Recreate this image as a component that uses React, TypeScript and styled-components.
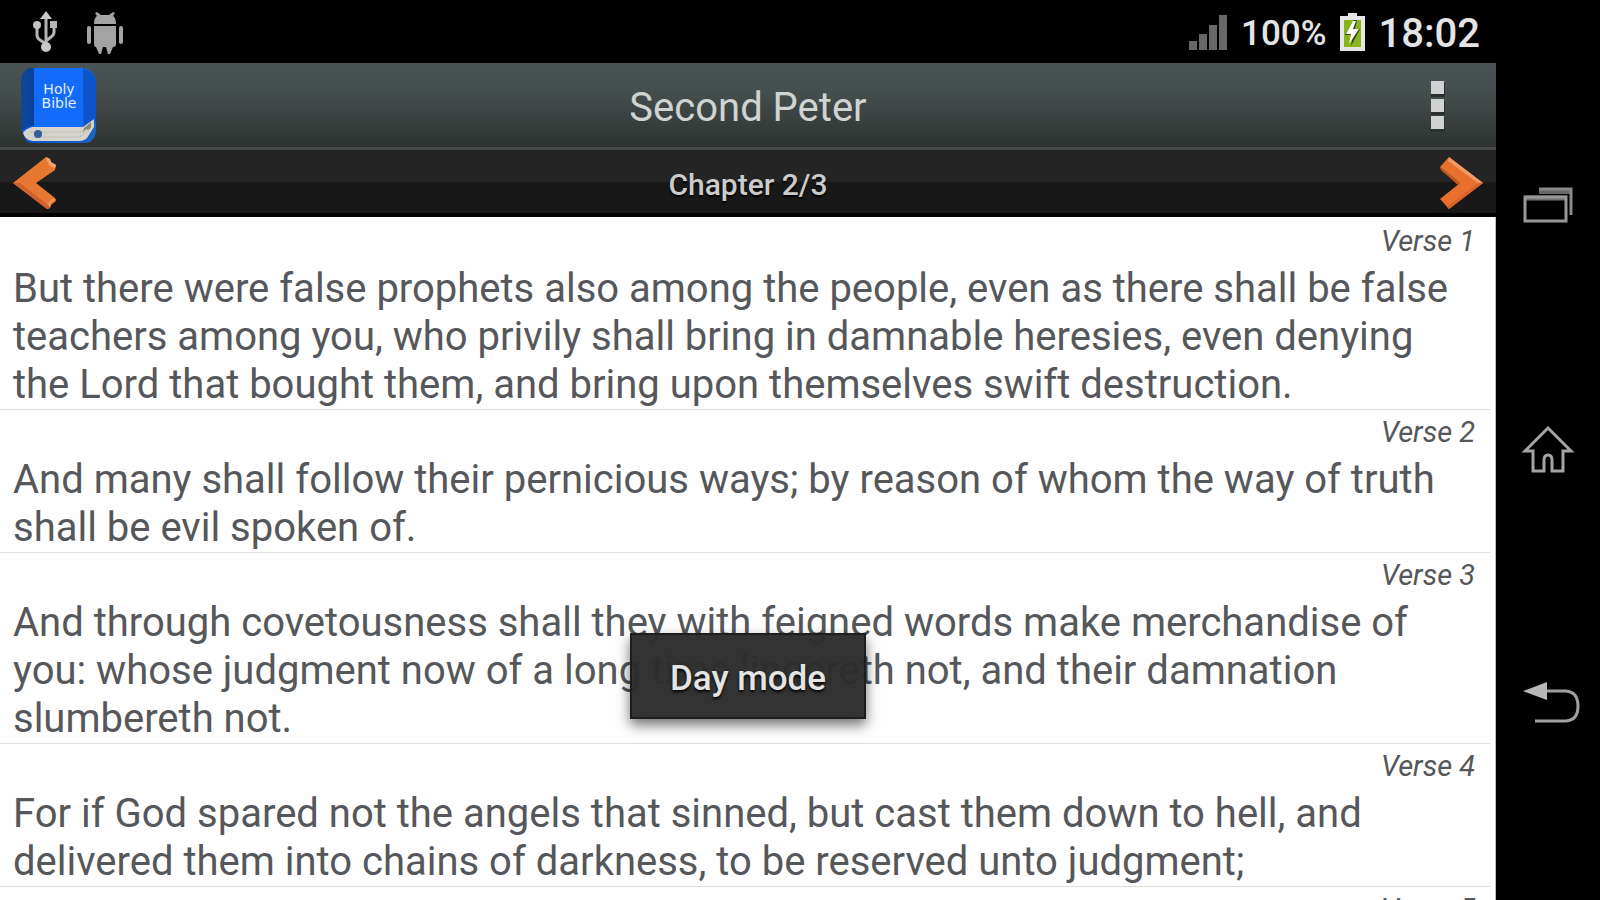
import React from "react";
import styled, { createGlobalStyle } from "styled-components";

const GlobalStyle = createGlobalStyle`
  *, *::before, *::after { box-sizing: border-box; }
  body {
    margin: 0;
    background: #000;
    font-family: Roboto, "Liberation Sans", sans-serif;
  }
  button { padding: 0; border: 0; background: none; cursor: pointer; }
  svg { display: block; flex: none; }
`;

const Device = styled.div`
  display: flex;
  height: 100vh;
  overflow: hidden;
  background: #000;
`;

const Screen = styled.div`
  position: relative;
  flex: 1;
  min-width: 0;
  display: flex;
  flex-direction: column;
`;

const StatusBar = styled.div`
  flex: none;
  display: flex;
  align-items: center;
  justify-content: space-between;
  height: 63px;
  padding: 0 16px 0 32px;
  color: #e4e4e4;
`;

const StatusGroup = styled.div<{ $gap: number }>`
  display: flex;
  align-items: center;
  gap: ${(p) => p.$gap}px;
`;

const Battery = styled.span`
  padding-top: 4px;
  font-size: 35px;
  line-height: 40px;
  font-weight: 500;
`;

const Clock = styled.time`
  padding-top: 4px;
  font-size: 40px;
  line-height: 48px;
  font-weight: 500;
`;

const TitleBar = styled.header`
  flex: none;
  display: grid;
  grid-template-columns: 104px 1fr 104px;
  align-items: center;
  height: 87px;
  border-bottom: 3px solid #454a49;
  background: linear-gradient(#4b5455, #454e4e 35%, #2d322f);
`;

const BookLink = styled.a`
  padding: 2px 0 0 20px;
`;

const Title = styled.h1`
  margin: 0;
  padding-top: 6px;
  font-size: 40px;
  line-height: 48px;
  font-weight: 400;
  text-align: center;
  color: #cfd3d2;
`;

const MenuButton = styled.button`
  display: flex;
  justify-content: center;
  align-items: center;
  height: 84px;
  padding: 2px 12px 0 0;
`;

const ChapterBar = styled.nav`
  flex: none;
  display: flex;
  align-items: center;
  justify-content: space-between;
  height: 67px;
  padding: 2px 12px 0;
  border-bottom: 4px solid #000;
  background: linear-gradient(#242424 50%, #181818 50%);
`;

const ChapterLabel = styled.h2`
  margin: 0;
  padding-top: 4px;
  font-size: 30px;
  line-height: 40px;
  font-weight: 500;
  color: #cbcbcb;
  text-shadow: 0 2px 2px #000;
`;

const VerseList = styled.ol`
  flex: 1;
  min-height: 0;
  margin: 0;
  padding: 2px 5px 0 0;
  overflow: hidden;
  list-style: none;
  background: #fefefe;
  border-right: 1px solid #bdbdbd;
`;

const Verse = styled.li`
  border-bottom: 1px solid #dedede;
`;

const VerseLabel = styled.div`
  padding: 2px 15px 0 0;
  font-size: 29px;
  line-height: 40px;
  font-style: italic;
  text-align: right;
  color: #555759;
`;

const VerseText = styled.p`
  margin: 0;
  padding: 4px 20px 0 13px;
  font-size: 40px;
  line-height: 48px;
  color: #55575a;
`;

const ToastLayer = styled.div`
  position: absolute;
  right: 0;
  bottom: 181px;
  left: 0;
  display: flex;
  justify-content: center;
  pointer-events: none;
`;

const Toast = styled.div`
  padding: 24px 38px 18px;
  border: 2px solid #1e1e1e;
  background: rgba(44, 44, 44, 0.97);
  box-shadow: 0 6px 12px rgba(0, 0, 0, 0.55);
  font-size: 35px;
  line-height: 40px;
  font-weight: 500;
  color: #e4e4e4;
  text-shadow: 0 2px 3px #000;
`;

const SystemKeys = styled.nav`
  flex: none;
  display: flex;
  flex-direction: column;
  width: 104px;
  padding: 81px 0 75px;
`;

const SystemKey = styled.button`
  flex: 1;
  display: flex;
  align-items: center;
  justify-content: center;
`;

const UsbIcon = () => (
  <svg width="28" height="44" viewBox="0 0 28 44" fill="none" stroke="#b4b4b4" strokeWidth="3">
    <path d="M14 8V38M5 16v9q0 3 3 5l6 4M22 16v6q0 3-3 5l-5 4" />
    <path d="M14 1l6 8H8z" fill="#c8c8c8" stroke="none" />
    <circle cx="5" cy="15" r="4" fill="#c0c0c0" stroke="none" />
    <path d="M18 11h7v7h-7z" fill="#b4b4b4" stroke="none" />
    <circle cx="14" cy="37" r="5" fill="#c8c8c8" stroke="none" />
  </svg>
);

const RobotIcon = () => (
  <svg width="38" height="44" viewBox="0 0 38 44" fill="#a3a3a3">
    <path d="M8 14c0-4 1-7 3-8L9 3l2-1 4 3h8l4-3 2 1-2 3c2 1 3 4 3 8z" />
    <path d="M8 16h22v18q0 3-3 3l-3 7h-2l-2-7h-3l-2 7h-2l-3-7q-2 0-2-3z" />
    <rect x="1" y="16" width="4" height="18" rx="2" />
    <rect x="33" y="16" width="4" height="18" rx="2" />
  </svg>
);

const SignalIcon = () => (
  <svg width="40" height="36" viewBox="0 0 40 36" fill="#686868">
    <rect x="0" y="27" width="8" height="9" />
    <rect x="10" y="20" width="8" height="16" />
    <rect x="20" y="11" width="8" height="25" />
    <rect x="30" y="1" width="8" height="35" />
  </svg>
);

const BatteryIcon = () => (
  <svg width="28" height="40" viewBox="0 0 28 40">
    <path d="M1 4h8V1h9v3h8v35H1z" fill="#e6e6e6" />
    <path d="M5 8h17v27H5z" fill="#86b61c" />
    <path d="M15 8h3l-2 9h5l-9 17 2-11H6z" fill="#33420f" />
    <path d="M14 9l-7 13h5l-2 10 10-15h-6l3-8z" fill="#fff" />
  </svg>
);

const BookIcon = () => (
  <svg width="78" height="78" viewBox="0 0 78 78">
    <defs>
      <linearGradient id="spine" x1="0" x2="1" y1="0" y2="0">
        <stop offset="0" stopColor="#0f4796" />
        <stop offset="1" stopColor="#0b3f9b" />
      </linearGradient>
      <linearGradient id="edge" x1="0" x2="1" y1="0" y2="0">
        <stop offset="0" stopColor="#0c55d2" />
        <stop offset="1" stopColor="#1c62c8" />
      </linearGradient>
    </defs>
    <path d="M10 1h55q8 2 11 11v51q0 7-6 12-4 1-9 1H14Q4 76 3 66l-2-4V12Q3 3 10 1z" fill="url(#edge)" />
    <path d="M14 1h-4Q2 4 1 12v52l6-4 8-2V1z" fill="url(#spine)" />
    <path d="M14 1h49v59H14z" fill="#126bfa" />
    <path d="M63 2l7 3q5 3 6 8v41L64 62z" fill="#0c54c8" />
    <path d="M3 66q2-4 9-6h51l11-8v8l-7 11q-3 3-8 3H13Q5 73 3 66z" fill="#d5d3cc" />
    <path d="M9 65h53l8-7M12 70h48l9-7" fill="none" stroke="#c2c0b9" strokeWidth="1" />
    <path d="M64 61l7-6v6l-3 2-2-1-3 4z" fill="#8a8a75" />
    <circle cx="18" cy="67" r="4" fill="#345d97" />
    <g fill="#e3ecff" fontFamily="DejaVu Sans, sans-serif" fontSize="14" textAnchor="middle">
      <text x="39" y="27">Holy</text>
      <text x="39" y="41">Bible</text>
    </g>
  </svg>
);

const MenuIcon = () => (
  <svg width="16" height="52" viewBox="0 0 16 52">
    <g fill="#29302e">
      <rect x="1" y="3" width="14" height="14" />
      <rect x="1" y="21" width="14" height="14" />
      <rect x="1" y="38" width="14" height="14" />
    </g>
    <g fill="#cfd2d1">
      <rect x="1" y="1" width="13" height="13" />
      <rect x="1" y="19" width="13" height="13" />
      <rect x="1" y="36" width="13" height="13" />
    </g>
  </svg>
);

const PrevIcon = () => (
  <svg width="46" height="54" viewBox="0 0 46 54">
    <path d="M1 27L34 1l4 2 1 3 5 3-1 5-19 13 19 15 1 3-5 4-1 3-3 1z" fill="#e87732" />
    <path d="M1 27l34 26 3-1 1-3-4-1L8 27z" fill="#d0602a" />
    <path d="M34 1l4 2 1 3 5 3-1 3-5-2-3-5z" fill="#f4a36c" />
    <path d="M44 43l-5 4-1 4-3-3 5-5z" fill="#f0965c" />
  </svg>
);

const NextIcon = () => (
  <svg width="46" height="54" viewBox="0 0 46 54">
    <path d="M11 1L45 27 11 53 2 43 22 27 2 11z" fill="#e86f2c" />
    <path d="M11 1L45 27h-5L10 5z" fill="#f29a63" />
    <path d="M2 11l20 16-2 2L3 14z" fill="#c9591f" />
    <path d="M45 27L11 53l-2-2 31-24z" fill="#d4622a" />
  </svg>
);

const RecentsIcon = () => (
  <svg width="64" height="64" viewBox="0 0 64 64" fill="none">
    <path d="M23 18h33" stroke="#666" strokeWidth="6" />
    <path d="M23 16h32v26" stroke="#8a8a8a" strokeWidth="3" />
    <path d="M9 25h42" stroke="#707070" strokeWidth="5" />
    <path d="M9 24h41v24H9z" stroke="#989898" strokeWidth="3" />
  </svg>
);

const HomeIcon = () => (
  <svg width="64" height="64" viewBox="0 0 64 64" fill="none" stroke="#a4a4a4" strokeWidth="3">
    <path d="M32 7L9 30h8v20h11V39q0-5 4-5t4 5v11h11V30h8z" />
  </svg>
);

const BackIcon = () => (
  <svg width="64" height="64" viewBox="0 0 64 64" fill="none">
    <path d="M28 22h22q12 1 12 15T50 52H19" stroke="#a0a0a0" strokeWidth="3" />
    <path d="M7 22l24-9v18z" fill="#b8b8b8" />
  </svg>
);

const verses = [
  "But there were false prophets also among the people, even as there shall be false teachers among you, who privily shall bring in damnable heresies, even denying the Lord that bought them, and bring upon themselves swift destruction.",
  "And many shall follow their pernicious ways; by reason of whom the way of truth shall be evil spoken of.",
  "And through covetousness shall they with feigned words make merchandise of you: whose judgment now of a long time lingereth not, and their damnation slumbereth not.",
  "For if God spared not the angels that sinned, but cast them down to hell, and delivered them into chains of darkness, to be reserved unto judgment;",
  "",
];

export default function App() {
  return (
    <>
      <GlobalStyle />
      <Device>
        <Screen>
          <StatusBar>
            <StatusGroup $gap={26}>
              <UsbIcon />
              <RobotIcon />
            </StatusGroup>
            <StatusGroup $gap={12}>
              <SignalIcon />
              <Battery>100%</Battery>
              <BatteryIcon />
              <Clock>18:02</Clock>
            </StatusGroup>
          </StatusBar>
          <TitleBar>
            <BookLink href="#" aria-label="Books">
              <BookIcon />
            </BookLink>
            <Title>Second Peter</Title>
            <MenuButton aria-label="More options">
              <MenuIcon />
            </MenuButton>
          </TitleBar>
          <ChapterBar>
            <button aria-label="Previous chapter">
              <PrevIcon />
            </button>
            <ChapterLabel>Chapter 2/3</ChapterLabel>
            <button aria-label="Next chapter">
              <NextIcon />
            </button>
          </ChapterBar>
          <VerseList>
            {verses.map((text, i) => (
              <Verse key={i}>
                <VerseLabel>Verse {i + 1}</VerseLabel>
                <VerseText>{text}</VerseText>
              </Verse>
            ))}
          </VerseList>
          <ToastLayer>
            <Toast role="status">Day mode</Toast>
          </ToastLayer>
        </Screen>
        <SystemKeys>
          <SystemKey aria-label="Recent apps">
            <RecentsIcon />
          </SystemKey>
          <SystemKey aria-label="Home">
            <HomeIcon />
          </SystemKey>
          <SystemKey aria-label="Back">
            <BackIcon />
          </SystemKey>
        </SystemKeys>
      </Device>
    </>
  );
}
